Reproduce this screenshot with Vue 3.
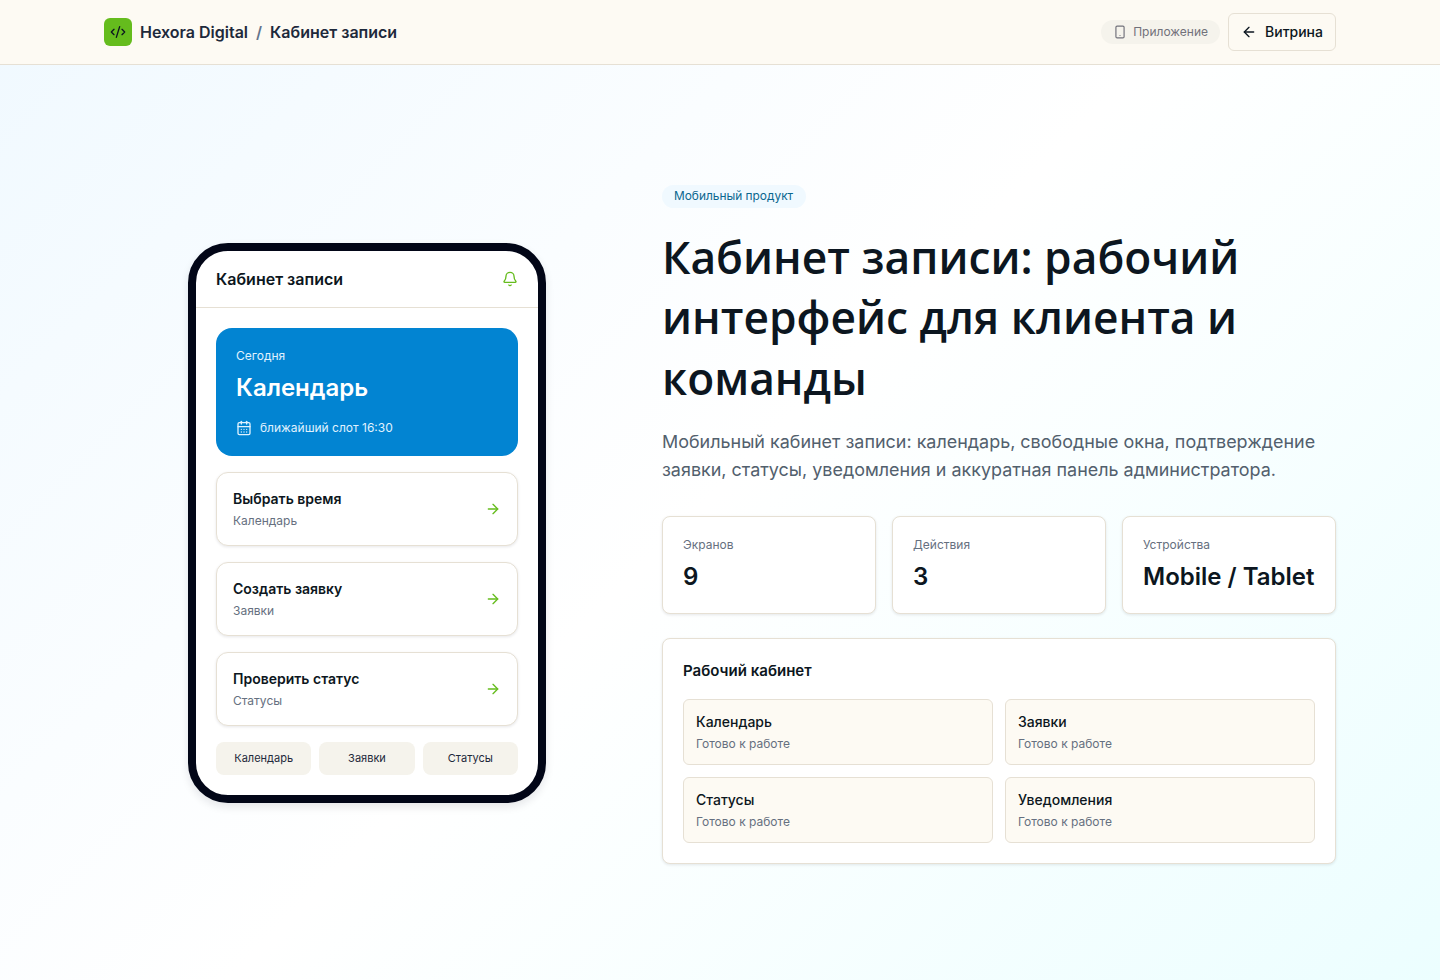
<script setup>
const actions = [
  { title: 'Выбрать время', sub: 'Календарь' },
  { title: 'Создать заявку', sub: 'Заявки' },
  { title: 'Проверить статус', sub: 'Статусы' }
]
const tabs = ['Календарь', 'Заявки', 'Статусы']
const stats = [
  { label: 'Экранов', value: '9' },
  { label: 'Действия', value: '3' },
  { label: 'Устройства', value: 'Mobile / Tablet' }
]
const modules = ['Календарь', 'Заявки', 'Статусы', 'Уведомления']
</script>

<template>
  <div class="page">
    <header class="topbar">
      <div class="topbar-inner">
        <div class="crumbs">
          <span class="logo">
            <svg width="16" height="16" viewBox="0 0 24 24" fill="none" stroke="currentColor" stroke-width="2" stroke-linecap="round" stroke-linejoin="round">
              <path d="m18 16 4-4-4-4" />
              <path d="m6 8-4 4 4 4" />
              <path d="m14.5 4-5 16" />
            </svg>
          </span>
          <span class="brand">Hexora Digital</span>
          <span class="slash">/</span>
          <span class="brand">Кабинет записи</span>
        </div>
        <div class="top-actions">
          <span class="app-pill">
            <svg width="14" height="14" viewBox="0 0 24 24" fill="none" stroke="currentColor" stroke-width="2" stroke-linecap="round" stroke-linejoin="round">
              <rect x="5" y="2" width="14" height="20" rx="2" />
              <path d="M12 18h.01" />
            </svg>
            Приложение
          </span>
          <button class="back-btn">
            <svg width="16" height="16" viewBox="0 0 24 24" fill="none" stroke="currentColor" stroke-width="2" stroke-linecap="round" stroke-linejoin="round">
              <path d="m12 19-7-7 7-7" />
              <path d="M19 12H5" />
            </svg>
            Витрина
          </button>
        </div>
      </div>
    </header>

    <main class="main">
      <div class="phone-col">
        <div class="phone">
          <div class="phone-head">
            <span class="phone-title">Кабинет записи</span>
            <svg class="bell" width="16" height="16" viewBox="0 0 24 24" fill="none" stroke="currentColor" stroke-width="2" stroke-linecap="round" stroke-linejoin="round">
              <path d="M10.268 21a2 2 0 0 0 3.464 0" />
              <path d="M3.262 15.326A1 1 0 0 0 4 17h16a1 1 0 0 0 .74-1.673C19.41 13.956 18 12.499 18 8A6 6 0 0 0 6 8c0 4.499-1.411 5.956-2.738 7.326" />
            </svg>
          </div>
          <div class="phone-body">
            <div class="hero-card">
              <div class="hero-small">Сегодня</div>
              <div class="hero-title">Календарь</div>
              <div class="hero-slot">
                <svg width="16" height="16" viewBox="0 0 24 24" fill="none" stroke="currentColor" stroke-width="2" stroke-linecap="round" stroke-linejoin="round">
                  <path d="M8 2v4" />
                  <path d="M16 2v4" />
                  <rect x="3" y="4" width="18" height="18" rx="2" />
                  <path d="M3 10h18" />
                  <path d="M8 14h.01" />
                  <path d="M12 14h.01" />
                  <path d="M16 14h.01" />
                  <path d="M8 18h.01" />
                  <path d="M12 18h.01" />
                  <path d="M16 18h.01" />
                </svg>
                ближайший слот 16:30
              </div>
            </div>
            <div v-for="a in actions" :key="a.title" class="action">
              <div>
                <div class="action-title">{{ a.title }}</div>
                <div class="action-sub">{{ a.sub }}</div>
              </div>
              <svg class="arrow" width="16" height="16" viewBox="0 0 24 24" fill="none" stroke="currentColor" stroke-width="2" stroke-linecap="round" stroke-linejoin="round">
                <path d="M5 12h14" />
                <path d="m12 5 7 7-7 7" />
              </svg>
            </div>
            <div class="tabs">
              <span v-for="t in tabs" :key="t" class="tab">{{ t }}</span>
            </div>
          </div>
        </div>
      </div>

      <section class="info">
        <span class="tag">Мобильный продукт</span>
        <h1>Кабинет записи: рабочий интерфейс для клиента и команды</h1>
        <p class="lead">Мобильный кабинет записи: календарь, свободные окна, подтверждение заявки, статусы, уведомления и аккуратная панель администратора.</p>
        <div class="stats">
          <div v-for="s in stats" :key="s.label" class="stat">
            <div class="stat-label">{{ s.label }}</div>
            <div class="stat-value">{{ s.value }}</div>
          </div>
        </div>
        <div class="panel">
          <div class="panel-title">Рабочий кабинет</div>
          <div class="modules">
            <div v-for="m in modules" :key="m" class="module">
              <div class="module-title">{{ m }}</div>
              <div class="module-sub">Готово к работе</div>
            </div>
          </div>
        </div>
      </section>
    </main>
  </div>
</template>

<style>
body {
  margin: 0;
}
</style>

<style scoped>
.page {
  min-height: 980px;
  font-family: Inter, "Noto Sans", sans-serif;
  color: #0c1620;
  background: linear-gradient(135deg, #f0f9ff 0%, #ffffff 50%, #ecfeff 100%);
}

.topbar {
  height: 64px;
  background: #fdfaf3;
  border-bottom: 1px solid #e6e0d4;
}

.topbar-inner {
  width: 1232px;
  height: 100%;
  margin: 0 auto;
  display: flex;
  align-items: center;
  justify-content: space-between;
}

.crumbs {
  display: flex;
  align-items: center;
  font-size: 16px;
  font-weight: 600;
  color: #1e293b;
}

.logo {
  width: 28px;
  height: 28px;
  border-radius: 6px;
  background: #65bc1d;
  color: #0c1620;
  display: flex;
  align-items: center;
  justify-content: center;
  margin-right: 8px;
}

.slash {
  margin: 0 8px;
  color: #64748b;
}

.top-actions {
  display: flex;
  align-items: center;
  gap: 8px;
}

.app-pill {
  height: 24px;
  padding: 0 12px 1px;
  box-sizing: border-box;
  border-radius: 12px;
  background: #f5f3ec;
  color: #71717a;
  font-size: 12px;
  display: flex;
  align-items: center;
  gap: 6px;
}

.back-btn {
  height: 38px;
  width: 108px;
  padding-bottom: 2px;
  border: 1px solid #e6e0d4;
  border-radius: 6px;
  background: #fdfaf3;
  color: #0c1620;
  font-family: inherit;
  font-size: 14px;
  font-weight: 500;
  display: flex;
  align-items: center;
  justify-content: center;
  gap: 8px;
}

.main {
  width: 1232px;
  margin: 0 auto;
  padding-top: 120px;
  display: grid;
  grid-template-columns: 526px 1fr;
  gap: 32px;
  align-items: center;
}

.phone-col {
  display: flex;
  justify-content: center;
  padding-bottom: 4px;
}

.phone {
  width: 358px;
  height: 560px;
  box-sizing: border-box;
  border: 8px solid #020617;
  border-radius: 40px;
  background: #fff;
  overflow: hidden;
  box-shadow: 0 4px 8px rgba(15, 23, 42, 0.1);
}

.phone-head {
  height: 56px;
  padding: 0 20px;
  border-bottom: 1px solid #e6e0d4;
  display: flex;
  align-items: center;
  justify-content: space-between;
}

.phone-title {
  font-size: 16px;
  font-weight: 600;
  color: #0c1620;
}

.bell {
  color: #65bc1d;
}

.phone-body {
  padding: 20px;
  display: flex;
  flex-direction: column;
  gap: 16px;
}

.hero-card {
  height: 128px;
  box-sizing: border-box;
  padding: 20px;
  border-radius: 16px;
  background: #0284d2;
  color: #fff;
}

.hero-small {
  font-size: 12px;
  line-height: 16px;
  color: #e0f2fe;
}

.hero-title {
  margin-top: 8px;
  font-size: 24px;
  line-height: 32px;
  font-weight: 600;
}

.hero-slot {
  margin-top: 16px;
  font-size: 12px;
  line-height: 16px;
  color: #e0f2fe;
  display: flex;
  align-items: center;
  gap: 8px;
}

.action {
  height: 74px;
  box-sizing: border-box;
  padding: 0 16px;
  border: 1px solid #e6e0d4;
  border-radius: 12px;
  background: #fff;
  box-shadow: 0 1px 3px rgba(15, 23, 42, 0.1);
  display: flex;
  align-items: center;
  justify-content: space-between;
}

.action-title {
  font-size: 14px;
  line-height: 20px;
  font-weight: 600;
  color: #0c1620;
}

.action-sub {
  margin-top: 4px;
  font-size: 12px;
  line-height: 16px;
  color: #667080;
}

.arrow {
  color: #65bc1d;
}

.tabs {
  display: grid;
  grid-template-columns: repeat(3, 1fr);
  gap: 8px;
}

.tab {
  height: 33px;
  border-radius: 8px;
  background: #f5f3ec;
  font-size: 11px;
  color: #1e293b;
  display: flex;
  align-items: center;
  justify-content: center;
}

.info {
  display: flex;
  flex-direction: column;
  align-items: flex-start;
}

.tag {
  height: 23px;
  width: 144px;
  box-sizing: border-box;
  padding: 0 12px 2px;
  border-radius: 12px;
  background: #f0f9ff;
  color: #0b6790;
  font-size: 11.9px;
  display: flex;
  align-items: center;
}

h1 {
  margin: 19px 0 0;
  font-family: "Open Sans", sans-serif;
  font-size: 44.3px;
  line-height: 60.48px;
  font-weight: 600;
  color: #0c1620;
}

.lead {
  margin: 19.56px 0 0;
  font-size: 17.95px;
  line-height: 28px;
  color: #52606d;
}

.stats {
  width: 100%;
  margin-top: 32px;
  display: grid;
  grid-template-columns: repeat(3, 1fr);
  gap: 16px;
}

.stat {
  height: 98px;
  box-sizing: border-box;
  padding: 20px;
  border: 1px solid #e6e0d4;
  border-radius: 8px;
  background: #fff;
  box-shadow: 0 1px 3px rgba(15, 23, 42, 0.1);
}

.stat-label {
  font-size: 12px;
  line-height: 16px;
  color: #667080;
}

.stat-value {
  margin-top: 8px;
  font-size: 24px;
  line-height: 32px;
  font-weight: 600;
  color: #0c1620;
}

.panel {
  width: 100%;
  margin-top: 24px;
  box-sizing: border-box;
  padding: 20px;
  border: 1px solid #e6e0d4;
  border-radius: 8px;
  background: #fff;
  box-shadow: 0 1px 3px rgba(15, 23, 42, 0.1);
}

.panel-title {
  font-size: 15.04px;
  line-height: 24px;
  font-weight: 600;
  color: #0c1620;
}

.modules {
  margin-top: 16px;
  display: grid;
  grid-template-columns: 1fr 1fr;
  gap: 12px;
}

.module {
  height: 66px;
  box-sizing: border-box;
  padding: 12px;
  border: 1px solid #e6e0d4;
  border-radius: 6px;
  background: #fdfaf3;
}

.module-title {
  font-size: 14px;
  line-height: 20px;
  font-weight: 500;
  color: #0c1620;
}

.module-sub {
  margin-top: 4px;
  font-size: 12px;
  line-height: 16px;
  color: #667080;
}
</style>
